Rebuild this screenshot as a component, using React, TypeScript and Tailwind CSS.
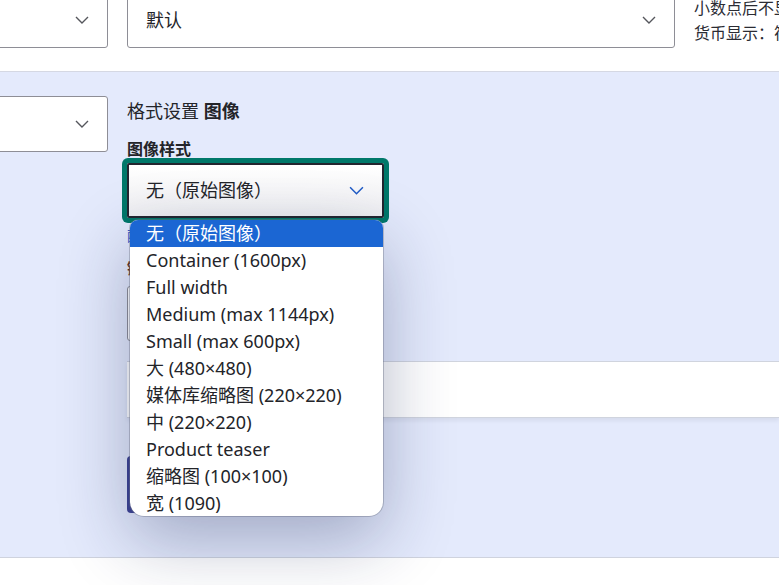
import React from "react";

const FONT = { fontFamily: '"Noto Sans", "Noto Sans CJK SC", sans-serif' };

function Chevron({ className }: { className?: string }) {
  return (
    <svg viewBox="0 0 14 8" className={className} fill="none" stroke="currentColor" strokeWidth="1.4">
      <path d="M1 1l6 6 6-6" />
    </svg>
  );
}

const items = [
  "无（原始图像）",
  "Container (1600px)",
  "Full width",
  "Medium (max 1144px)",
  "Small (max 600px)",
  "大 (480×480)",
  "媒体库缩略图 (220×220)",
  "中 (220×220)",
  "Product teaser",
  "缩略图 (100×100)",
  "宽 (1090)",
];

export default function App() {
  return (
    <div className="relative w-[779px] h-[585px] overflow-hidden bg-white text-[#232429]" style={FONT}>
      {/* top row */}
      <div className="h-[72px] flex items-start border-b border-[#d5d8e3]">
        <div className="shrink-0 ml-[-28px] mt-[-8px] w-[136px] h-[56px] border border-[#8e8e96] rounded-[3px] bg-white flex items-center justify-end pr-[18px]">
          <Chevron className="w-[14px] h-[8px] text-[#55565c]" />
        </div>
        <div className="shrink-0 ml-[19px] mt-[-8px] w-[548px] h-[56px] border border-[#8e8e96] rounded-[3px] bg-white flex items-center justify-between pl-[18px] pr-[18px]">
          <span className="text-[18px]">默认</span>
          <Chevron className="w-[14px] h-[8px] text-[#55565c]" />
        </div>
        <div className="shrink-0 ml-[19px] text-[16px] leading-[25px] mt-[-4px] whitespace-nowrap text-[#2b2c33]">
          <div>小数点后不显示</div>
          <div>货币显示：符号</div>
        </div>
      </div>

      {/* blue section */}
      <div className="h-[486px] bg-[#e4eafc] border-b border-[#cfd3de] flex items-start pt-[24px]">
        <div className="shrink-0 ml-[-28px] w-[136px] h-[56px] border border-[#8e8e96] rounded-[3px] bg-white flex items-center justify-end pr-[18px]">
          <Chevron className="w-[14px] h-[8px] text-[#55565c]" />
        </div>
        <div className="ml-[19px] flex-1 flex flex-col">
          <div className="text-[18px] leading-[26px] mt-[2px]">
            格式设置 <span className="font-bold">图像</span>
          </div>
          <div className="text-[16px] font-bold leading-[20px] mt-[15px]">图像样式</div>
          <div className="mt-[4px] w-[257px] h-[55px] border-2 border-[#23252f] rounded-[2px] shadow-[0_0_0_5px_#00786a] bg-gradient-to-b from-white to-[#efeff2] flex items-center justify-between pl-[17px] pr-[18px]">
            <span className="text-[18px]">无（原始图像）</span>
            <Chevron className="w-[15px] h-[9px] text-[#1f5bc6]" />
          </div>
          <div className="mt-[8px] text-[14px] text-[#2457c9] leading-[20px]">配置图像样式</div>
          <div className="mt-[12px] text-[15px] font-bold text-[#5a2f1c] leading-[20px]">链接图像到</div>
          <div className="mt-[8px] w-[240px] h-[55px] border border-[#8e8e96] rounded-[3px] bg-white" />
          <div className="mt-[20px] h-[57px] bg-white border-t border-b border-[#d0d4de] shadow-[0_3px_4px_rgba(0,0,0,0.06)]" />
          <div className="mt-[38px] w-[180px] h-[57px] bg-[#3e4493] rounded-[4px]" />
        </div>
      </div>

      {/* dropdown list */}
      <div className="absolute left-[130px] top-[220px] w-[253px] h-[296px] bg-white rounded-t-[8px] rounded-b-[14px] overflow-hidden shadow-[0_24px_70px_rgba(20,30,80,0.32),0_0_0_1px_rgba(120,125,140,0.4)]">
        {items.map((t, i) => (
          <div
            key={t}
            className={
              i === 0
                ? "h-[27px] leading-[26px] pl-[16px] text-[18px] whitespace-nowrap bg-[#1b66d3] text-white"
                : "h-[27px] leading-[26px] pl-[16px] text-[18px] whitespace-nowrap text-[#232429]"
            }
          >
            {t}
          </div>
        ))}
      </div>
    </div>
  );
}
